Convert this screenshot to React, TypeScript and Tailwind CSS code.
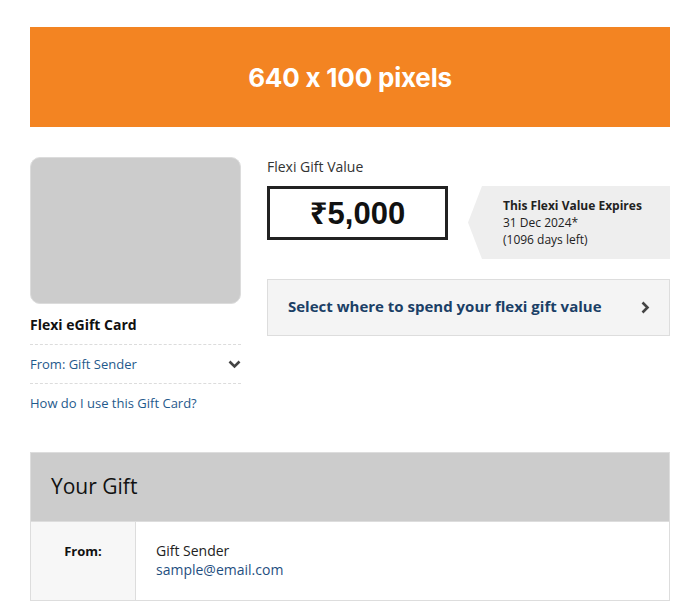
import React from "react";

const ChevronDown = () => (
  <svg width="13" height="9" viewBox="0 0 13 9" className="block">
    <path d="M1.5 1.5 L6.5 6.5 L11.5 1.5" fill="none" stroke="#444" strokeWidth="2.6" />
  </svg>
);

const ChevronRight = () => (
  <svg width="9" height="13" viewBox="0 0 9 13" className="block">
    <path d="M1.5 1.5 L6.5 6.5 L1.5 11.5" fill="none" stroke="#444" strokeWidth="2.6" />
  </svg>
);

export default function App() {
  return (
    <div className="w-full min-h-[601px] bg-white" style={{ fontFamily: "'Open Sans', 'Liberation Sans', sans-serif" }}>
      <div className="w-[640px] mx-auto pt-[27px]">
        <div className="h-[100px] bg-[#f38422] flex items-center justify-center">
          <span className="text-white text-[26px] font-bold tracking-[-0.2px]" style={{ fontFamily: "Inter, 'Liberation Sans', sans-serif" }}>
            640 x 100 pixels
          </span>
        </div>

        <div className="flex mt-[30px] gap-[26px]">
          <div className="w-[211px] shrink-0">
            <div className="h-[147px] rounded-[10px] bg-[#cccccc] border border-[#dcdcdc]" />
            <div className="mt-[12px] text-[14px] font-bold text-[#111] leading-[18px]">Flexi eGift Card</div>
            <div className="mt-[10px] border-t border-dashed border-[#dcdcdc] flex items-center justify-between h-[40px] border-b">
              <span className="text-[13px] text-[#1f5a8c] pt-[1px]">From: Gift Sender</span>
              <span className="pr-[0px]"><ChevronDown /></span>
            </div>
            <div className="mt-[9px] text-[13px] text-[#1f5a8c] leading-[20px]">How do I use this Gift Card?</div>
          </div>

          <div className="flex-1">
            <div className="text-[14px] text-[#333] leading-[20px]">Flexi Gift Value</div>
            <div className="mt-[9px] flex items-start gap-[20px]">
              <div className="w-[181px] h-[54px] border-[3px] border-[#222] flex items-center justify-center">
                <span className="text-[31px] font-bold text-[#111] leading-none" style={{ fontFamily: "'Liberation Sans', 'Noto Sans', sans-serif" }}>₹5,000</span>
              </div>
              <div
                className="flex-1 h-[73px] bg-[#eeeeee] pl-[35px] flex flex-col justify-center text-[12px] leading-[17px] text-[#222]"
                style={{ clipPath: "polygon(14px 0, 100% 0, 100% 100%, 14px 100%, 0 50%)" }}
              >
                <div className="font-bold">This Flexi Value Expires</div>
                <div>31 Dec 2024*</div>
                <div>(1096 days left)</div>
              </div>
            </div>
            <div className="mt-[20px] h-[57px] bg-[#f4f4f4] border border-[#dddddd] flex items-center justify-between pl-[20px] pr-[19px]">
              <span className="text-[15px] font-bold text-[#1b3f66] pb-[3px]">Select where to spend your flexi gift value</span>
              <ChevronRight />
            </div>
          </div>
        </div>

        <div className="mt-[39px] border border-[#dddddd]">
          <div className="h-[68px] bg-[#cccccc] flex items-center pl-[20px]">
            <span className="text-[21px] text-[#111]">Your Gift</span>
          </div>
          <div className="flex border-t border-[#dddddd]">
            <div className="w-[105px] bg-[#f7f7f7] border-r border-[#dddddd] text-center pt-[20px] h-[78px] text-[13px] font-bold text-[#111]">
              From:
            </div>
            <div className="pl-[20px] pt-[19px] text-[14px] leading-[19px]">
              <div className="text-[#222]">Gift Sender</div>
              <div className="text-[#1f4f7f]">sample@email.com</div>
            </div>
          </div>
          <div className="h-[20px] flex border-t border-[#dddddd]">
            <div className="w-[105px] bg-[#f7f7f7] border-r border-[#dddddd]" />
          </div>
        </div>
      </div>
    </div>
  );
}
